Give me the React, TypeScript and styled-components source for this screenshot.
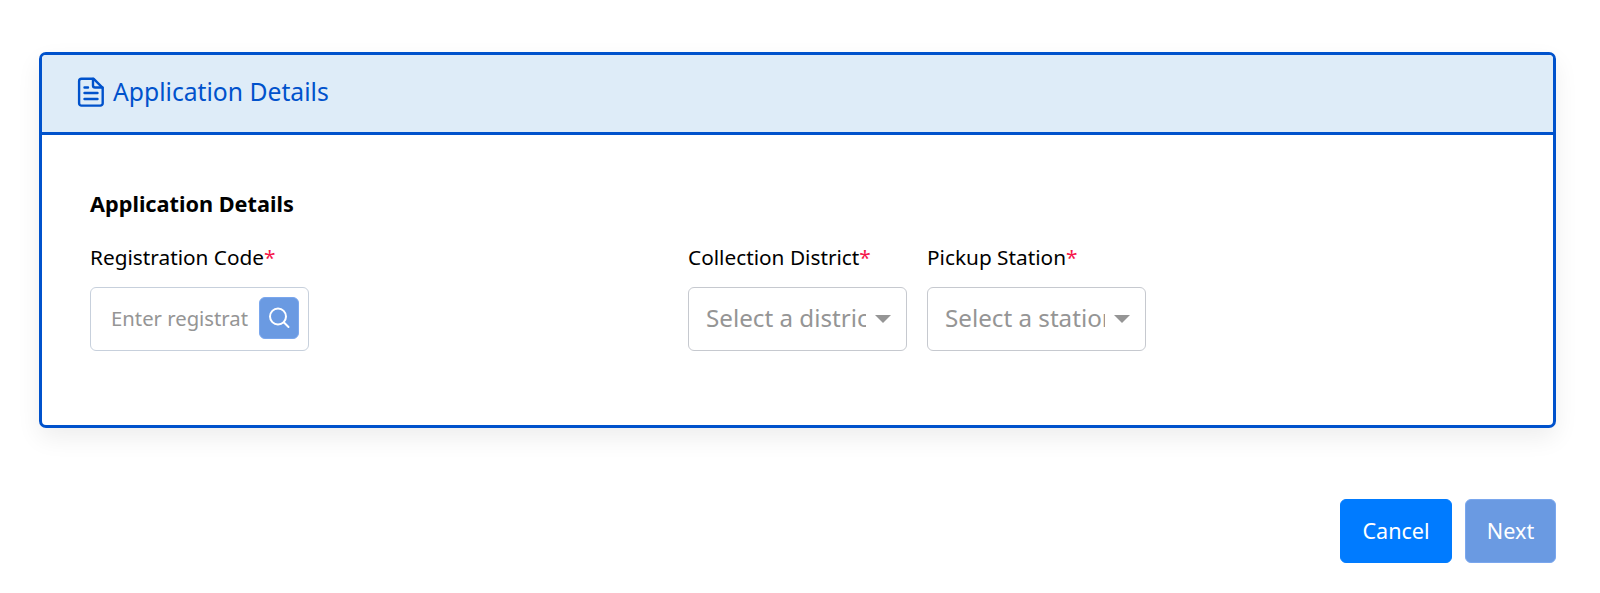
import React from "react";
import styled, { createGlobalStyle } from "styled-components";

const GlobalStyle = createGlobalStyle`
  html, body {
    margin: 0;
    padding: 0;
    background: #fff;
    font-family: "Noto Sans", "Open Sans", sans-serif;
    font-variant-ligatures: none;
  }
`;

const Page = styled.div`
  box-sizing: border-box;
  width: 1600px;
  height: 593px;
  padding: 52px 44px 30px 39px;
  overflow: hidden;
`;

const Card = styled.section`
  box-sizing: border-box;
  height: 376px;
  border: 3px solid #0052cc;
  border-radius: 7px;
  box-shadow: 0 10px 24px rgba(0, 0, 0, 0.07);
  overflow: hidden;
`;

const CardHeader = styled.header`
  box-sizing: border-box;
  height: 80px;
  display: flex;
  align-items: center;
  gap: 8px;
  padding: 0 0 4px 35px;
  background: #deecf8;
  border-bottom: 3px solid #0052cc;
  color: #0052cc;
  font-size: 24.7px;
`;

const CardBody = styled.div`
  padding: 56px 48px 0;
`;

const SectionTitle = styled.h2`
  margin: 0 0 27px;
  font-size: 21.7px;
  line-height: 26px;
  font-weight: 700;
  color: #000;
`;

const FieldRow = styled.div`
  display: flex;
`;

const Field = styled.div<{ $gap: number }>`
  width: 219px;
  margin-right: ${({ $gap }) => $gap}px;
`;

const Label = styled.label`
  display: block;
  margin-bottom: 17px;
  font-size: 20.8px;
  line-height: 26px;
  white-space: nowrap;
  color: #000;
`;

const Required = styled.span`
  color: #f5164b;
`;

const Control = styled.div`
  box-sizing: border-box;
  height: 64px;
  display: flex;
  align-items: center;
  border: 1px solid #c6c9cf;
  border-radius: 6px;
  background: #fff;
  overflow: hidden;
`;

const SearchInput = styled(Control)`
  padding: 0 9px 0 20px;
  border-color: #c7d0dc;
`;

const Placeholder = styled.span<{ $size: number }>`
  flex: 1;
  min-width: 0;
  padding-bottom: 3px;
  overflow: hidden;
  white-space: nowrap;
  color: #959595;
  font-size: ${({ $size }) => $size}px;
`;

const SearchButton = styled.button`
  flex: none;
  width: 40px;
  height: 42px;
  margin: 0 0 2px 10px;
  padding: 0;
  display: flex;
  align-items: center;
  justify-content: center;
  border: 1px solid #7aa7ee;
  border-radius: 6px;
  background: #6a9ae2;
`;

const SelectBox = styled(Control)`
  padding: 0 15px 0 17px;
`;

const Caret = styled.span`
  flex: none;
  margin-left: 9px;
  width: 0;
  height: 0;
  border-left: 8px solid transparent;
  border-right: 8px solid transparent;
  border-top: 8px solid #959595;
`;

const Actions = styled.div`
  display: flex;
  justify-content: flex-end;
  gap: 13px;
  margin-top: 71px;
`;

const ActionButton = styled.button<{ $disabled?: boolean; $width: number }>`
  box-sizing: border-box;
  width: ${({ $width }) => $width}px;
  height: 64px;
  padding: 0 0 2px;
  border: 1px solid ${({ $disabled }) => ($disabled ? "#7aa7ee" : "#007bff")};
  border-radius: 6px;
  background: ${({ $disabled }) => ($disabled ? "#6a9ae2" : "#007bff")};
  color: #fff;
  font-family: inherit;
  font-size: 21.6px;
`;

const DocumentIcon = () => (
  <svg width="28" height="30" viewBox="0 0 28 30" fill="none" stroke="#0052cc" strokeWidth="2.4" strokeLinejoin="round" strokeLinecap="round">
    <path d="M4.5 1.8h12.2l9 9v15.4a2.4 2.4 0 0 1-2.4 2.4H4.5a2.4 2.4 0 0 1-2.4-2.4V4.2a2.4 2.4 0 0 1 2.4-2.4z" />
    <path d="M16 2v6.5a2 2 0 0 0 2 2h7.5" />
    <path d="M7.5 10.5h3.5M7.5 16h13M7.5 22h13" />
  </svg>
);

const SearchIcon = () => (
  <svg width="24" height="24" viewBox="0 0 24 24" fill="none" stroke="#fff" strokeWidth="2" strokeLinecap="round">
    <circle cx="11" cy="10.5" r="8" />
    <path d="M17 16.5l4.5 4.5" />
  </svg>
);

export default function App() {
  return (
    <Page>
      <GlobalStyle />
      <Card>
        <CardHeader>
          <DocumentIcon />
          Application Details
        </CardHeader>
        <CardBody>
          <SectionTitle>Application Details</SectionTitle>
          <FieldRow>
            <Field $gap={379}>
              <Label>
                Registration Code<Required>*</Required>
              </Label>
              <SearchInput>
                <Placeholder $size={20.3}>Enter registration code</Placeholder>
                <SearchButton aria-label="Search">
                  <SearchIcon />
                </SearchButton>
              </SearchInput>
            </Field>
            <Field $gap={20}>
              <Label>
                Collection District<Required>*</Required>
              </Label>
              <SelectBox>
                <Placeholder $size={24.2}>Select a district</Placeholder>
                <Caret />
              </SelectBox>
            </Field>
            <Field $gap={0}>
              <Label>
                Pickup Station<Required>*</Required>
              </Label>
              <SelectBox>
                <Placeholder $size={24.2}>Select a station</Placeholder>
                <Caret />
              </SelectBox>
            </Field>
          </FieldRow>
        </CardBody>
      </Card>
      <Actions>
        <ActionButton $width={112}>Cancel</ActionButton>
        <ActionButton $width={91} $disabled>
          Next
        </ActionButton>
      </Actions>
    </Page>
  );
}
